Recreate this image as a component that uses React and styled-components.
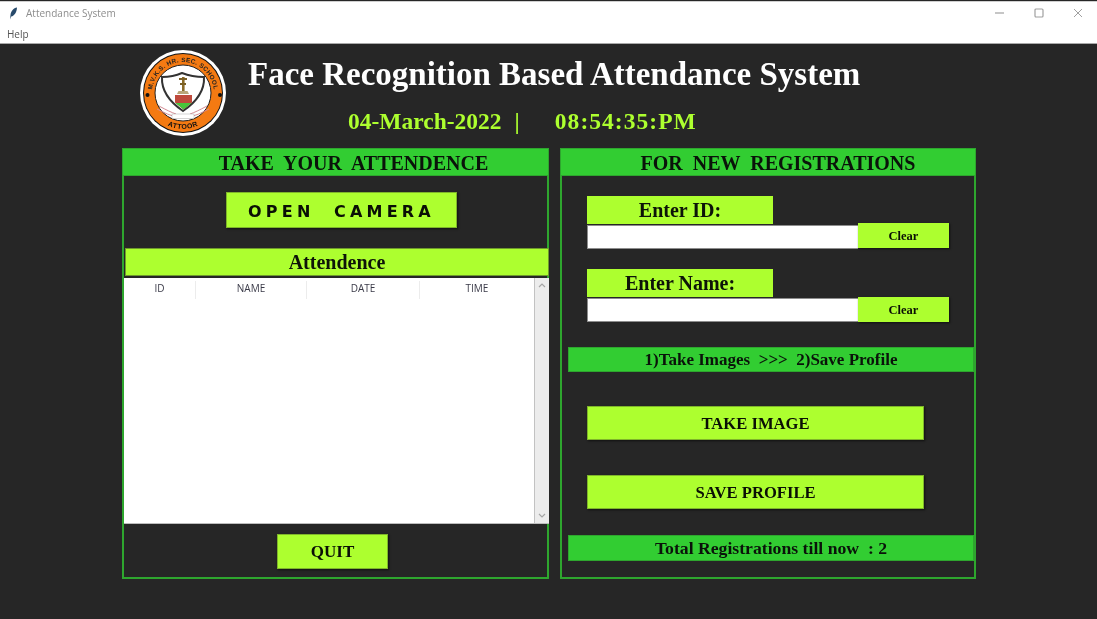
import React from "react";
import styled, { createGlobalStyle } from "styled-components";

const lime = "#adff2f";
const green = "#32cd32";
const edge = "#2ea62e";
const serif = '"Liberation Serif", "Times New Roman", serif';
const sans = '"Open Sans", "Noto Sans", sans-serif';

const GlobalStyle = createGlobalStyle`
  html, body {
    margin: 0;
    padding: 0;
    background: #262626;
  }
`;

const Screen = styled.div`
  width: 1097px;
  height: 619px;
  overflow: hidden;
  display: flex;
  flex-direction: column;
  background: #262626;
  filter: blur(0.35px);
`;

const TitleBar = styled.div`
  height: 21px;
  margin-top: 1px;
  background: #fff;
  border-top: 1px solid #cfcfcf;
  box-sizing: border-box;
  display: flex;
  align-items: center;
  padding: 2px 0 0 9px;
  font: 10px ${sans};
  color: #8d8d8d;
`;

const AppName = styled.span`
  margin-left: 8px;
`;

const WindowButtons = styled.div`
  margin-left: auto;
  display: flex;
  align-items: center;
  gap: 29px;
  padding-right: 14px;
  svg {
    display: block;
  }
`;

const MenuBar = styled.div`
  height: 22px;
  background: #fff;
  border-bottom: 1px solid #a9a9a9;
  box-sizing: border-box;
  padding: 5px 0 0 7px;
  font: 10px ${sans};
  color: #555;
`;

const Header = styled.header`
  height: 104px;
  display: flex;
  padding-left: 140px;
  box-sizing: border-box;
`;

const LogoWrap = styled.div`
  width: 86px;
  height: 86px;
  margin-top: 6px;
  flex: none;
`;

const Heading = styled.div`
  width: 612px;
  margin-left: 22px;
`;

const AppTitle = styled.h1`
  margin: 8px 0 0;
  font: bold 33px/44px ${serif};
  color: #fff;
  white-space: nowrap;
  text-align: center;
`;

const Clock = styled.div`
  margin: 11px 0 0 100px;
  display: flex;
  font: bold 23.5px/28px ${serif};
  color: ${lime};
  white-space: nowrap;
`;

const ClockDivider = styled.span`
  margin: 0 35px 0 13px;
`;

const ClockTime = styled.span`
  letter-spacing: 1.05px;
`;

const Panels = styled.main`
  display: flex;
  gap: 11px;
  padding-left: 122px;
`;

const Panel = styled.section`
  width: ${(p) => p.$width}px;
  height: 431px;
  box-sizing: border-box;
  border: 2px solid ${edge};
  display: flex;
  flex-direction: column;
`;

const PanelTitle = styled.h2`
  height: 28px;
  margin: -2px -2px 0;
  background: ${green};
  border: 1px solid ${edge};
  box-sizing: border-box;
  flex: none;
  text-align: center;
  font: bold 20px/28px ${serif};
  color: #0a130a;
  white-space: pre;
  padding-left: ${(p) => p.$shift || 0}px;
`;

const LimeButton = styled.button`
  display: block;
  width: ${(p) => p.$width}px;
  height: ${(p) => p.$height}px;
  padding: 0;
  background: ${lime};
  border: 1px solid #7fb52a;
  box-shadow: 1px 1px 2px #111;
  box-sizing: border-box;
  font: bold 17px ${serif};
  color: #0a0f05;
  white-space: pre;
`;

const CameraButton = styled(LimeButton)`
  margin: 16px 0 0 102px;
  padding-top: 2px;
  font: bold 16px "DejaVu Sans", Verdana, sans-serif;
  letter-spacing: 4.2px;
`;

const QuitButton = styled(LimeButton)`
  margin: 10px 0 0 153px;
`;

const AttendanceBar = styled.div`
  height: 28px;
  margin: 20px -2px 0 1px;
  background: ${lime};
  border: 1px solid #6f9a2c;
  box-sizing: border-box;
  text-align: center;
  font: bold 20px/26px ${serif};
  color: #0d1408;
`;

const TableArea = styled.div`
  height: 246px;
  margin: 2px -2px 0 0;
  display: flex;
  background: #fff;
  border-bottom: 1px solid #bdbdbd;
  box-sizing: border-box;
`;

const Table = styled.div`
  flex: 1;
  border-right: 1px solid #c2c2c2;
`;

const TableHead = styled.div`
  display: grid;
  grid-template-columns: 71px 111px 113px 1fr;
  height: 21px;
  padding-top: 3px;
  box-sizing: border-box;
`;

const HeadCell = styled.div`
  text-align: center;
  font: 10px/15px ${sans};
  color: #3a3a48;
  border-left: ${(p) => (p.$first ? "none" : "1px solid #ececec")};
`;

const ScrollBar = styled.div`
  width: 14px;
  background: #ececec;
  display: flex;
  flex-direction: column;
  justify-content: space-between;
  align-items: center;
  padding: 5px 0;
  svg {
    display: block;
  }
`;

const FieldBlock = styled.div`
  margin: 20px 0 0 25px;
`;

const FieldLabel = styled.div`
  width: 186px;
  height: 28px;
  background: ${lime};
  box-sizing: border-box;
  text-align: center;
  font: bold 20px/28px ${serif};
  color: #0d1408;
`;

const FieldRow = styled.div`
  display: flex;
  align-items: flex-start;
  margin-top: ${(p) => p.$top}px;
`;

const TextInput = styled.input`
  width: 271px;
  height: 24px;
  margin-top: ${(p) => p.$top}px;
  padding: 0;
  background: #fff;
  border: 1px solid #8d8d8d;
  border-right: none;
  box-sizing: border-box;
`;

const ClearButton = styled(LimeButton)`
  width: 91px;
  height: 25px;
  padding-top: 2px;
  border: none;
  font-size: 12.5px;
`;

const InfoBar = styled.div`
  height: ${(p) => p.$height}px;
  margin: ${(p) => p.$top}px 0 0 6px;
  background: ${green};
  border: 1px solid ${edge};
  box-sizing: border-box;
  text-align: center;
  font: bold ${(p) => p.$size}px/24px ${serif};
  color: #0a130a;
  white-space: pre;
`;

const WideButton = styled(LimeButton)`
  margin: ${(p) => p.$top}px 0 0 25px;
  padding-top: 2px;
  font-size: 16.6px;
`;

const Logo = () => (
  <svg width="86" height="86" viewBox="0 0 86 86">
    <defs>
      <path id="schoolArc" d="M12 43 A31 31 0 0 1 74 43" />
      <path id="townArc" d="M7 43 A36 36 0 0 0 79 43" />
    </defs>
    <circle cx="43" cy="43" r="43" fill="#fff" />
    <circle cx="43" cy="43" r="40" fill="#111" />
    <circle cx="43" cy="43" r="39" fill="#f47a12" />
    <circle cx="43" cy="43" r="28" fill="#fff" stroke="#222" />
    <text fontSize="6.3" fontWeight="700" fontFamily="Liberation Sans" fill="#222" letterSpacing="0.35">
      <textPath href="#schoolArc" startOffset="50%" textAnchor="middle">M.V.K.S. HR. SEC. SCHOOL</textPath>
    </text>
    <text fontSize="7" fontWeight="700" fontFamily="Liberation Sans" fill="#111" letterSpacing="0.5">
      <textPath href="#townArc" startOffset="50%" textAnchor="middle">ATTOOR</textPath>
    </text>
    <circle cx="7.5" cy="45" r="2" fill="#111" />
    <circle cx="80" cy="45" r="2" fill="#111" />
    <path d="M22 27 Q33 27 42 23 Q52 27 64 27 Q65 46 43 61 Q21 46 22 27Z" fill="#fff" stroke="#333" strokeWidth="2" />
    <rect x="42" y="27" width="2.6" height="14" fill="#8a6a28" />
    <path d="M39 28h8v2h-8zM40 33h6v2h-6z" fill="#7a5f25" />
    <path d="M38.5 41h9l1.5 3h-12z" fill="#b9a67a" />
    <path d="M35 45h17v7.5l-8.500 7-8.500-7z" fill="#bf4a3c" />
    <path d="M35.500 53h16l-8 6.500z" fill="#48c43a" />
    <path d="M19 56 Q30 62 36 64 M67 56 Q56 62 50 64 M17 59 Q28 65 36 67 M69 59 Q58 65 50 67" stroke="#d58b93" strokeWidth="1" fill="none" />
    <rect x="32" y="64" width="22" height="4.500" fill="#fff" stroke="#aaa" strokeWidth="0.500" />
  </svg>
);

const Feather = () => (
  <svg width="9" height="13" viewBox="0 0 9 13">
    <path d="M8 0.500 C4.500 1 2 4 1.500 8 L1 12.500 L2.200 9.500 C5.500 9 7.800 5 8 0.500Z" fill="#274a6b" />
  </svg>
);

const Chevron = ({ down }) => (
  <svg width="8" height="5" viewBox="0 0 8 5">
    <path d={down ? "M1 1l3 3 3-3" : "M1 4l3-3 3 3"} fill="none" stroke="#a6a6a6" strokeWidth="1.200" />
  </svg>
);

export default function App() {
  return (
    <Screen>
      <GlobalStyle />
      <TitleBar>
        <Feather />
        <AppName>Attendance System</AppName>
        <WindowButtons>
          <svg width="10" height="10" viewBox="0 0 10 10">
            <path d="M0 5h9" stroke="#a8a8a8" strokeWidth="1.300" />
          </svg>
          <svg width="10" height="10" viewBox="0 0 10 10">
            <rect x="1" y="1" width="8" height="8" rx="1" fill="none" stroke="#a0a0a0" strokeWidth="1.200" />
          </svg>
          <svg width="10" height="10" viewBox="0 0 10 10">
            <path d="M1 1l8 8M9 1l-8 8" stroke="#a0a0a0" strokeWidth="1" />
          </svg>
        </WindowButtons>
      </TitleBar>
      <MenuBar>Help</MenuBar>
      <Header>
        <LogoWrap>
          <Logo />
        </LogoWrap>
        <Heading>
          <AppTitle>Face Recognition Based Attendance System</AppTitle>
          <Clock>
            <span>04-March-2022</span>
            <ClockDivider>|</ClockDivider>
            <ClockTime>08:54:35:PM</ClockTime>
          </Clock>
        </Heading>
      </Header>
      <Panels>
        <Panel $width={427}>
          <PanelTitle $shift={36}>{"TAKE  YOUR  ATTENDENCE"}</PanelTitle>
          <CameraButton $width={231} $height={36}>{"OPEN  CAMERA"}</CameraButton>
          <AttendanceBar>Attendence</AttendanceBar>
          <TableArea>
            <Table>
              <TableHead>
                <HeadCell $first>ID</HeadCell>
                <HeadCell>NAME</HeadCell>
                <HeadCell>DATE</HeadCell>
                <HeadCell>TIME</HeadCell>
              </TableHead>
            </Table>
            <ScrollBar>
              <Chevron />
              <Chevron down />
            </ScrollBar>
          </TableArea>
          <QuitButton $width={111} $height={35}>QUIT</QuitButton>
        </Panel>
        <Panel $width={416}>
          <PanelTitle $shift={20}>{"FOR  NEW  REGISTRATIONS"}</PanelTitle>
          <FieldBlock>
            <FieldLabel>Enter ID:</FieldLabel>
            <FieldRow $top={-1}>
              <TextInput $top={2} />
              <ClearButton>Clear</ClearButton>
            </FieldRow>
          </FieldBlock>
          <FieldBlock>
            <FieldLabel>Enter Name:</FieldLabel>
            <FieldRow $top={0}>
              <TextInput $top={1} />
              <ClearButton>Clear</ClearButton>
            </FieldRow>
          </FieldBlock>
          <InfoBar $top={25} $height={25} $size={17}>{"1)Take Images  >>>  2)Save Profile"}</InfoBar>
          <WideButton $width={337} $height={34} $top={34}>TAKE IMAGE</WideButton>
          <WideButton $width={337} $height={34} $top={35}>SAVE PROFILE</WideButton>
          <InfoBar $top={26} $height={26} $size={17.7}>{"Total Registrations till now  : 2"}</InfoBar>
        </Panel>
      </Panels>
    </Screen>
  );
}
